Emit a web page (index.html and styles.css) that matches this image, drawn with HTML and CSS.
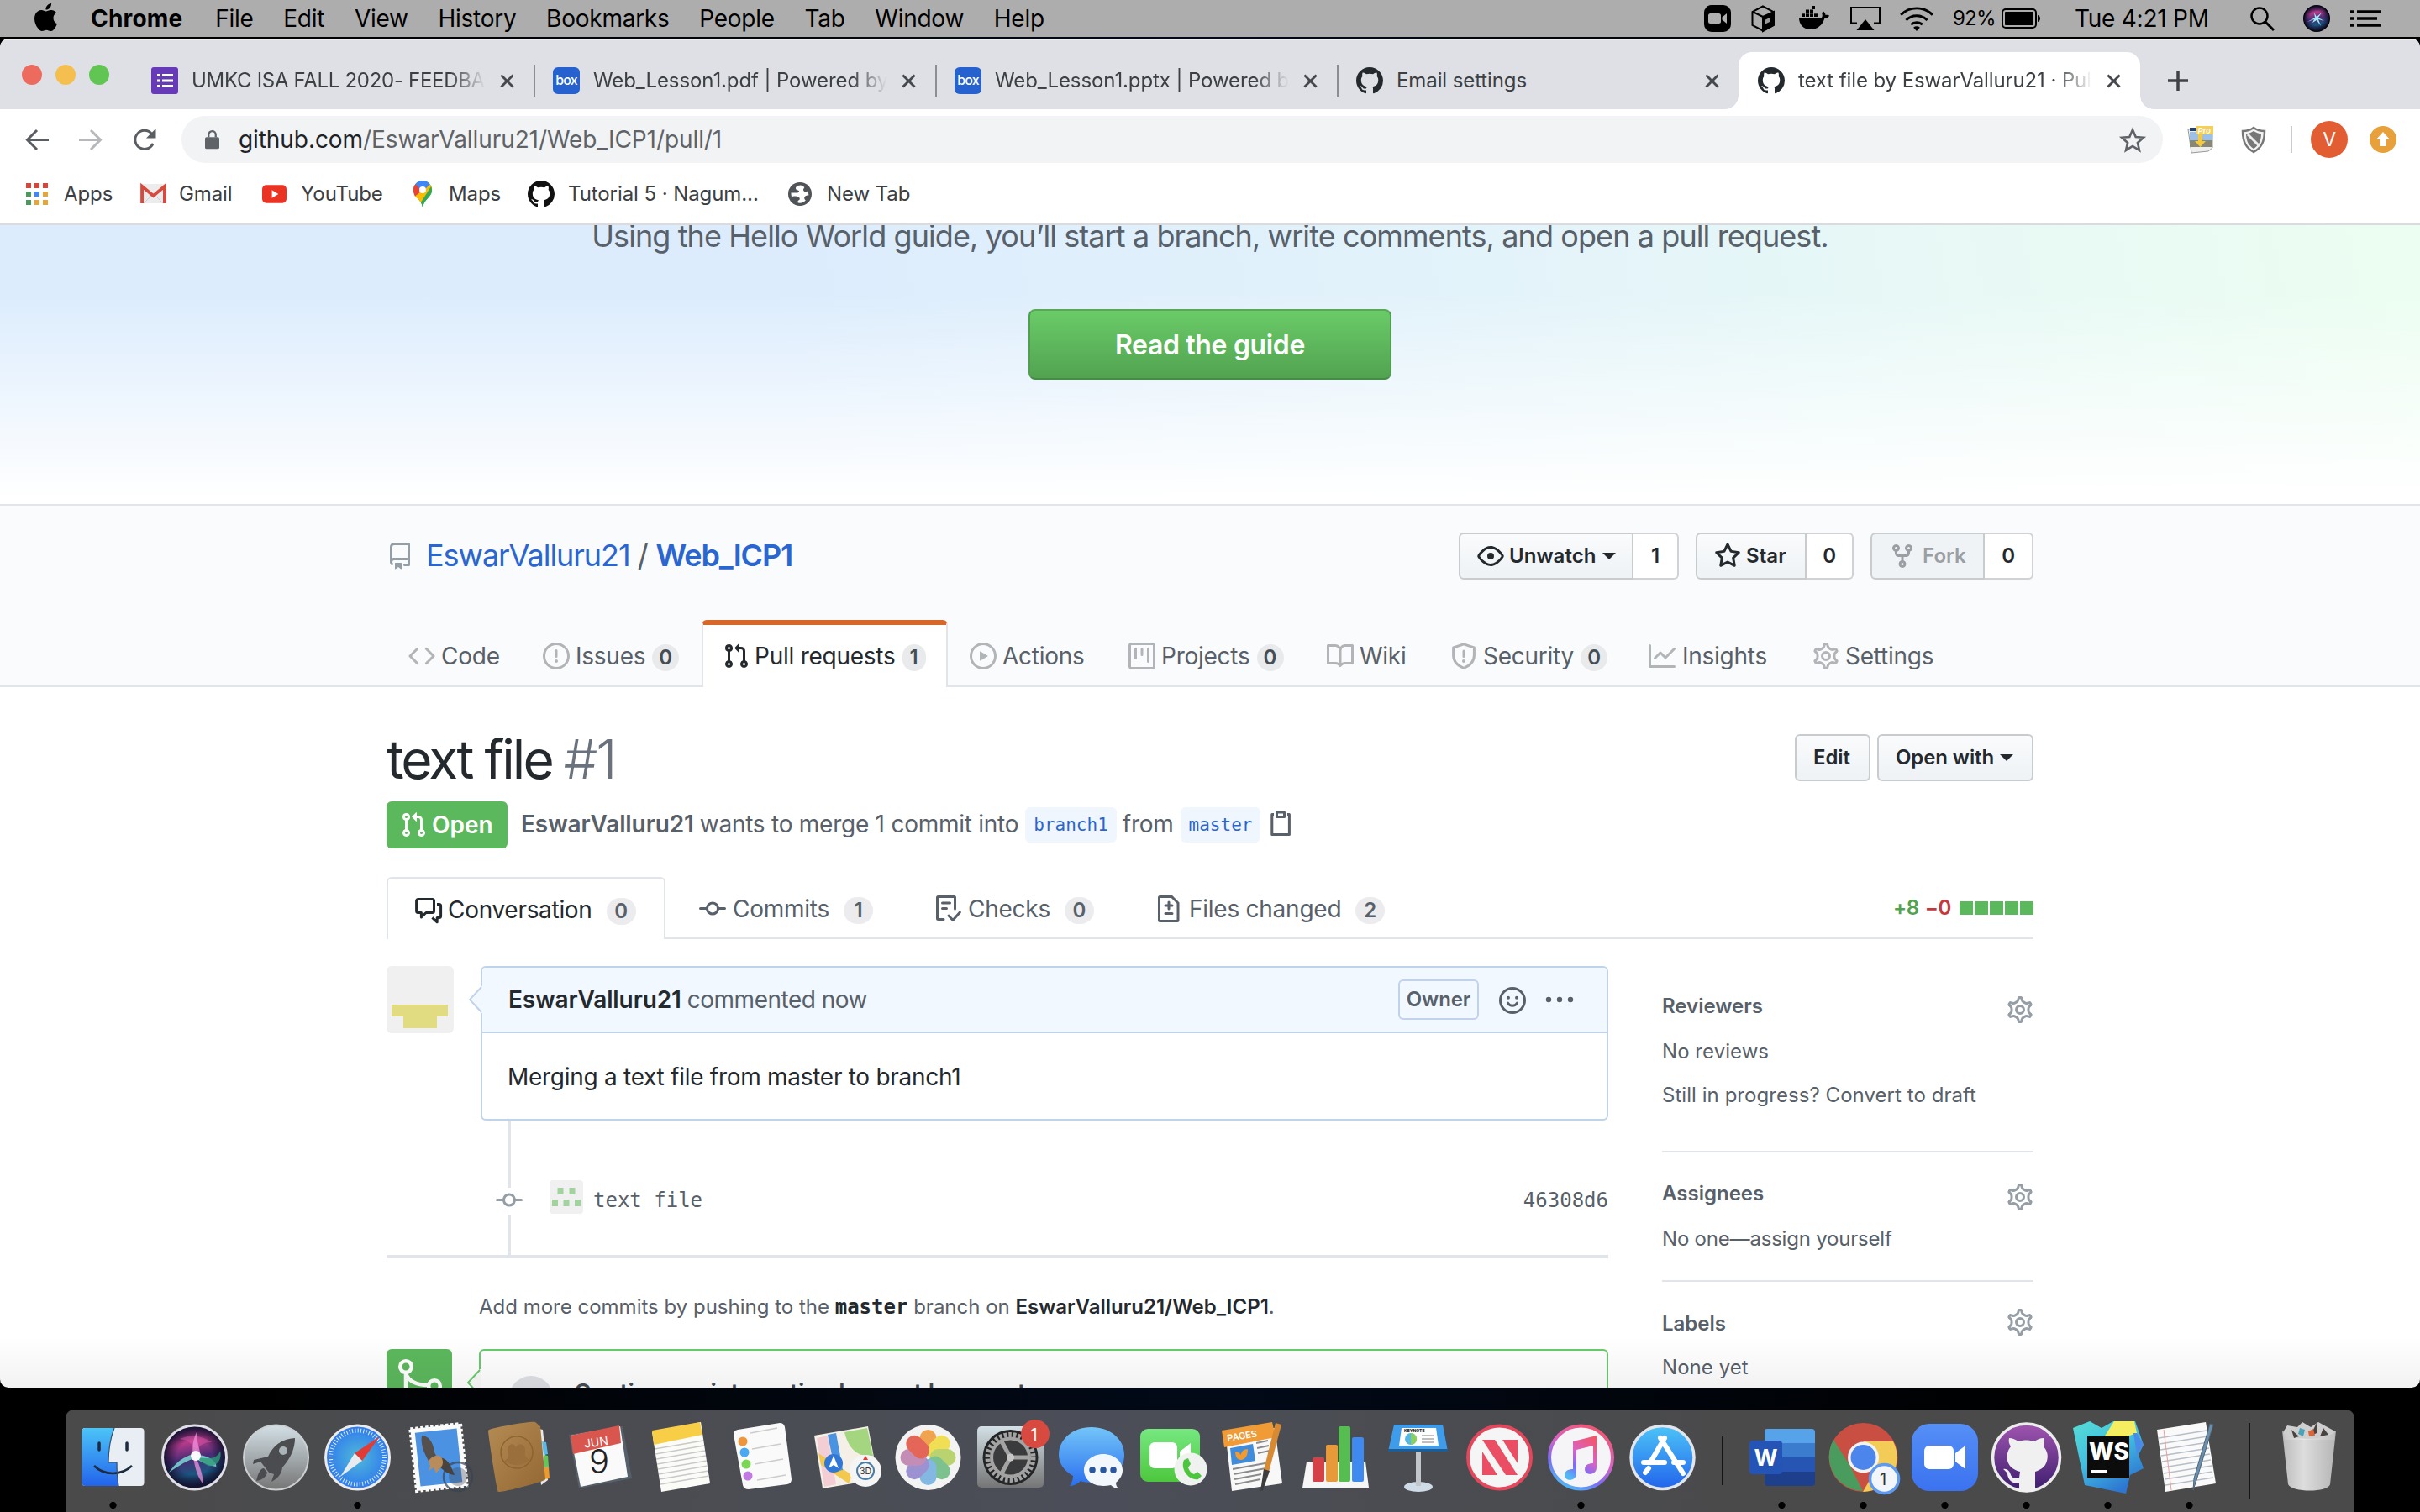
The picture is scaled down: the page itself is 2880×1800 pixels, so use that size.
FILE: index.html
```html
<!DOCTYPE html>
<html lang="en">
<head>
<meta charset="utf-8">
<title>text file by EswarValluru21 · Pull Request #1</title>
<link rel="stylesheet" href="styles.css">
</head>
<body>
<svg class="defs" aria-hidden="true">
  <defs>
    <symbol id="github" viewBox="0 0 16 16"><path d="M8 0C3.58 0 0 3.58 0 8c0 3.54 2.29 6.53 5.47 7.59.4.07.55-.17.55-.38 0-.19-.01-.82-.01-1.49-2.01.37-2.53-.49-2.69-.94-.09-.23-.48-.94-.82-1.13-.28-.15-.68-.52-.01-.53.63-.01 1.08.58 1.23.82.72 1.21 1.87.87 2.33.66.07-.52.28-.87.51-1.07-1.78-.2-3.64-.89-3.64-3.95 0-.87.31-1.59.82-2.15-.08-.2-.36-1.02.08-2.12 0 0 .67-.21 2.2.82.64-.18 1.32-.27 2-.27.68 0 1.36.09 2 .27 1.53-1.04 2.2-.82 2.2-.82.44 1.1.16 1.92.08 2.12.51.56.82 1.27.82 2.15 0 3.07-1.87 3.75-3.65 3.95.29.25.54.73.54 1.48 0 1.07-.01 1.93-.01 2.2 0 .21.15.46.55.38A8.013 8.013 0 0016 8c0-4.42-3.58-8-8-8z"/></symbol>
    <symbol id="pr" viewBox="0 0 16 16"><path fill-rule="evenodd" d="M7.177 3.073L9.573.677A.25.25 0 0110 .854v4.792a.25.25 0 01-.427.177L7.177 3.427a.25.25 0 010-.354zM3.75 2.5a.75.75 0 100 1.5.75.75 0 000-1.5zm-2.25.75a2.25 2.25 0 113 2.122v5.256a2.251 2.251 0 11-1.5 0V5.372A2.25 2.25 0 011.5 3.25zM11 2.5h-1V4h1a1 1 0 011 1v5.628a2.251 2.251 0 101.5 0V5A2.5 2.5 0 0011 2.5zm1 10.25a.75.75 0 111.5 0 .75.75 0 01-1.5 0zM3.75 12a.75.75 0 100 1.5.75.75 0 000-1.5z"/></symbol>
    <symbol id="gear" viewBox="0 0 16 16"><g fill="none" stroke="currentColor"><path stroke-width="1.36" transform="translate(8 8) scale(1.11) translate(-8 -8)" d="M7.429 1.525a6.593 6.593 0 011.142 0c.036.003.108.036.137.146l.289 1.105c.147.56.55.967.997 1.189.174.086.341.183.501.29.417.278.97.423 1.53.27l1.102-.303c.11-.03.175.016.195.046.219.31.41.641.573.989.014.031.022.11-.059.19l-.815.806c-.411.406-.562.957-.53 1.456a4.588 4.588 0 010 .582c-.032.499.119 1.05.53 1.456l.815.806c.08.08.073.159.059.19a6.494 6.494 0 01-.573.99c-.02.029-.086.074-.195.045l-1.103-.303c-.559-.153-1.112-.008-1.529.27-.16.107-.327.204-.5.29-.449.222-.851.628-.998 1.189l-.289 1.105c-.029.11-.101.143-.137.146a6.613 6.613 0 01-1.142 0c-.036-.003-.108-.037-.137-.146l-.289-1.105c-.147-.56-.55-.967-.997-1.189a4.502 4.502 0 01-.501-.29c-.417-.278-.97-.423-1.53-.27l-1.102.303c-.11.03-.175-.016-.195-.046a6.492 6.492 0 01-.573-.989c-.014-.031-.022-.11.059-.19l.815-.806c.411-.406.562-.957.53-1.456a4.587 4.587 0 010-.582c.032-.499-.119-1.05-.53-1.456l-.815-.806c-.08-.08-.073-.159-.059-.19a6.44 6.44 0 01.573-.99c.02-.029.086-.075.195-.045l1.103.303c.559.153 1.112.008 1.529-.27.16-.107.327-.204.5-.29.449-.222.851-.628.998-1.189l.289-1.105c.029-.11.101-.143.137-.146z"/><circle cx="8" cy="8" r="2.25" stroke-width="1.5"/></g></symbol>
    <symbol id="commit" viewBox="0 0 16 16"><path fill-rule="evenodd" d="M10.5 7.75a2.5 2.5 0 11-5 0 2.5 2.5 0 015 0zm1.43.75a4.002 4.002 0 01-7.86 0H.75a.75.75 0 110-1.5h3.32a4.001 4.001 0 017.86 0h3.32a.75.75 0 110 1.5h-3.32z"/></symbol>
    <symbol id="close" viewBox="0 0 18 18"><path d="M1.500 1.500 16.500 16.500M16.500 1.500 1.500 16.500" stroke="#45484d" stroke-width="3"/></symbol>
    <linearGradient id="sky" x2="0" y2="1"><stop stop-color="#4cc4f7"/><stop offset="1" stop-color="#2264ec"/></linearGradient>
    <linearGradient id="steel" x2="0" y2="1"><stop stop-color="#d3e0e6"/><stop offset="1" stop-color="#757575"/></linearGradient>
    <radialGradient id="saf"><stop stop-color="#4fb9d8"/><stop offset="1" stop-color="#2f79ee"/></radialGradient>
    <linearGradient id="orb" x1=".4" y1="0" x2=".6" y2="1"><stop stop-color="#4a1f5c"/><stop offset=".25" stop-color="#b83a8c"/><stop offset=".5" stop-color="#4a2c74"/><stop offset=".75" stop-color="#1b5580"/><stop offset="1" stop-color="#141433"/></linearGradient>
    <radialGradient id="rim"><stop offset=".55" stop-color="#12102e" stop-opacity="0"/><stop offset="1" stop-color="#12102e"/></radialGradient>
    <linearGradient id="mus" x1=".8" y1="0" x2=".3" y2="1"><stop stop-color="#f2566a"/><stop offset=".45" stop-color="#d962c4"/><stop offset=".75" stop-color="#7a6cf5"/><stop offset="1" stop-color="#50b9f5"/></linearGradient>
    <linearGradient id="grn" x2="0" y2="1"><stop stop-color="#76e880"/><stop offset="1" stop-color="#4dc73d"/></linearGradient>
    <linearGradient id="msg" x2="0" y2="1"><stop stop-color="#73c5f9"/><stop offset="1" stop-color="#2a70ee"/></linearGradient>
    <linearGradient id="zm" x2="0" y2="1"><stop stop-color="#558ff6"/><stop offset="1" stop-color="#3b72f0"/></linearGradient>
    <linearGradient id="gh" x2="0" y2="1"><stop stop-color="#a055b0"/><stop offset="1" stop-color="#3c1d6e"/></linearGradient>
    <linearGradient id="tan" x2="1" y2="1"><stop stop-color="#b58b54"/><stop offset="1" stop-color="#936732"/></linearGradient>
    <linearGradient id="can" x2="1" y2="0"><stop stop-color="#c4c4c4"/><stop offset=".4" stop-color="#e8e8e8"/><stop offset="1" stop-color="#bdbdbd"/></linearGradient>
    <linearGradient id="wsg" x2=".6" y2="1"><stop stop-color="#56ddd6"/><stop offset=".5" stop-color="#43bfe0"/><stop offset="1" stop-color="#2d76d2"/></linearGradient>
  </defs>
</svg>

<header class="menubar">
  <svg class="apple" viewBox="2.500 0 19 24"><path d="M12.152 6.896c-.948 0-2.415-1.078-3.960-1.040-2.040.027-3.910 1.183-4.961 3.014-2.117 3.675-.546 9.103 1.519 12.090 1.013 1.454 2.208 3.090 3.792 3.039 1.520-.065 2.090-.987 3.935-.987 1.831 0 2.350.987 3.960.948 1.637-.026 2.676-1.480 3.676-2.948 1.156-1.688 1.636-3.325 1.662-3.415-.039-.013-3.182-1.221-3.220-4.857-.026-3.040 2.480-4.494 2.597-4.559-1.429-2.090-3.623-2.324-4.390-2.376-2-.156-3.675 1.090-4.610 1.090zM15.530 3.830c.843-1.012 1.400-2.427 1.245-3.830-1.207.052-2.662.805-3.532 1.818-.78.896-1.454 2.338-1.273 3.714 1.338.104 2.715-.688 3.559-1.701"/></svg>
  <nav class="menus"><b>Chrome</b><span>File</span><span>Edit</span><span>View</span><span>History</span><span>Bookmarks</span><span>People</span><span>Tab</span><span>Window</span><span>Help</span></nav>
  <div class="status">
    <svg class="st-zoom" viewBox="0 0 32 32"><rect width="32" height="32" rx="9"/><rect x="5" y="10" width="15" height="12" rx="2.500" fill="#b0b0b0"/><path d="M21.500 14.500 27 10v12l-5.500-4.500z" fill="#b0b0b0"/></svg>
    <svg class="st-box" viewBox="0 0 28 32"><path d="M14 1.500 26.500 8v16L14 30.500 1.500 24V8z" fill="none" stroke="#000" stroke-width="2"/><path d="M14 14 27 8v16L14 31zM2 8l12 6" stroke="#000" stroke-width="2"/><path d="M17 22.500 22 20v-5l-5 2.500z" fill="#999"/></svg>
    <svg class="st-docker" viewBox="0 0 36 30"><path d="M0 14h27c1-1.500 1-4 0-5.500l2-2c1.500 1 2.500 3 2.500 4.500 1.500-.5 3.500-.3 4.500.8-1 2-3 2.800-5.500 2.800C28 23 22 28 14 28 5 28 0 22 0 14z"/><path d="M3 9h20v4H3zM8 4.500h10v4H8zM15 0h4v4h-4z"/><path d="M7.500 4v9M12.500 4v9M17.500 4v9M3 8.800h20" stroke="#adadad"/></svg>
    <svg class="st-air" viewBox="0 0 36 28"><path d="M8 19.500H1V1h34v18.500h-7" fill="none" stroke="#000" stroke-width="2"/><path d="M18 15 28.500 28h-21z"/></svg>
    <svg class="st-wifi" viewBox="0 0 42 30"><g fill="none" stroke="#000" stroke-width="3"><path d="M1.500 10a27.500 27.500 0 0 1 39 0M8 16.500a18.500 18.500 0 0 1 26 0M14 22a10.500 10.500 0 0 1 14 0"/></g><path d="M21 30l-4-4.500a6 6 0 0 1 8 0z"/></svg>
    <span class="pct">92%</span>
    <svg class="st-bat" viewBox="0 0 46 24"><rect x="1" y="1" width="40" height="22" rx="4" fill="none" stroke="#000" stroke-width="2"/><rect x="4" y="4" width="34" height="16" rx="1"/><path d="M43 8c4 1 4 7 0 8z"/></svg>
    <span class="clock">Tue 4:21 PM</span>
    <svg class="st-find" viewBox="0 0 29 29"><circle cx="11" cy="11" r="9.500" fill="none" stroke="#000" stroke-width="2.500"/><path d="m18 18 10 10" stroke="#000" stroke-width="3"/></svg>
    <svg class="st-siri" viewBox="0 0 32 32"><circle cx="16" cy="16" r="15" fill="url(#orb)" stroke="#000" stroke-width="2"/><circle cx="16" cy="16" r="15" fill="url(#rim)"/><path d="M5 20l9-5-1-6 3 5 6-5-4 6 7 4-7-2 3 8-5-7-5 3 2-4z" fill="#9fe8f0"/></svg>
    <svg class="st-list" viewBox="0 0 37 20"><path d="M8 2h29M8 10h24M8 18h29M0 2h4M0 10h4M0 18h4" stroke="#000" stroke-width="3.500"/></svg>
  </div>
</header>

<main class="window">
  <div class="tabstrip">
    <div class="lights"><i class="red"></i><i class="yellow"></i><i class="green"></i></div>
    <div class="tab"><svg class="fav" viewBox="0 0 32 32"><rect width="32" height="32" rx="3" fill="#673ab7"/><path d="M7 9.500h4M7 16h4M7 22.500h4M13 9.500h13M13 16h13M13 22.500h13" stroke="#fff" stroke-width="3"/></svg><span class="ttl t1">UMKC ISA FALL 2020- FEEDBACK</span><svg class="x"><use href="#close"/></svg></div>
    <div class="tab div"><span class="fav box">box</span><span class="ttl">Web_Lesson1.pdf | Powered by Box</span><svg class="x"><use href="#close"/></svg></div>
    <div class="tab div"><span class="fav box">box</span><span class="ttl">Web_Lesson1.pptx | Powered by Box</span><svg class="x"><use href="#close"/></svg></div>
    <div class="tab div"><svg class="fav" fill="#24292e"><use href="#github"/></svg><span class="ttl nofade">Email settings</span><svg class="x"><use href="#close"/></svg></div>
    <div class="tab active"><svg class="fav" fill="#24292e"><use href="#github"/></svg><span class="ttl">text file by EswarValluru21 · Pull Request</span><svg class="x"><use href="#close"/></svg></div>
    <svg class="plus" viewBox="0 0 24 24"><path d="M12 0v24M0 12h24" stroke="#3f4246" stroke-width="3.500"/></svg>
  </div>

  <div class="toolbar">
    <svg class="nav-i" viewBox="0 0 28 26"><path d="M28 13H3M14 1.500 2.500 13 14 24.500" fill="none" stroke="#5a5d61" stroke-width="3"/></svg>
    <svg class="nav-i" viewBox="0 0 28 26"><path d="M0 13h25M14 1.500 25.500 13 14 24.500" fill="none" stroke="#b6b8bb" stroke-width="3"/></svg>
    <svg class="nav-i" viewBox="0 0 28 28"><path d="M24.500 18.500A11.500 11.500 0 1 1 22.500 6.200L25 9" fill="none" stroke="#5a5d61" stroke-width="3"/><path d="M28 0v12H16z" fill="#5a5d61"/></svg>
    <div class="omni">
      <svg class="lock" viewBox="0 0 18 24"><rect y="9" width="18" height="15" rx="2" fill="#5f6368"/><path d="M4.500 9V6a4.500 4.500 0 0 1 9 0v3" fill="none" stroke="#5f6368" stroke-width="2.400"/></svg>
      <span class="url">github.com<em>/EswarValluru21/Web_ICP1/pull/1</em></span>
      <svg class="star" viewBox="0 0 30 28"><path d="m15 2.500 3.700 8.500 9.200.8-7 6.100 2.100 9L15 22l-8 4.900 2.100-9-7-6.100 9.200-.8z" fill="none" stroke="#5f6368" stroke-width="2.600"/></svg>
    </div>
    <svg class="ext" viewBox="0 0 32 32"><path d="M2 4l21-3 8 5v20l-5 4-20 2z" fill="#eee" stroke="#999"/><path d="M4 7h27v10H4z" fill="#9dc0e8"/><path d="M4 17h27v8H4z" fill="#8a8674"/><path d="M4 2h8v4H4z" fill="#26436f"/><path d="M14 10h5v8h4l-6.500 7-6.500-7h4z" fill="#f3c944"/><rect x="12" width="20" height="10" fill="#f7cf55"/><text x="13.500" y="8.600" class="pro">Pro</text></svg>
    <svg class="ext" viewBox="0 0 32 32"><path d="M16 2C12 5 7 6 3 6c0 13 4 20 13 25 9-5 13-12 13-25-4 0-9-1-13-4z" fill="#f2f2f2" stroke="#777" stroke-width="2.500"/><path d="M16 6c-3 2-6 3-9 3.500.3 9 3 13.500 9 17.500 6-4 8.700-8.500 9-17.500C22 9 19 8 16 6z" fill="#777"/><path d="m9 10 14 14" stroke="#eee" stroke-width="3"/></svg>
    <i class="vline"></i>
    <span class="avatar-v">V</span>
    <svg class="upd" viewBox="0 0 32 32"><circle cx="16" cy="16" r="16" fill="#e8a03a"/><path d="M16 7l8 9h-4v8h-8v-8H8z" fill="#fff"/></svg>
  </div>

  <div class="bookmarks">
    <svg class="b-apps" viewBox="0 0 26 26"><path d="M0 3h26" stroke="#db4437" stroke-width="6" stroke-dasharray="6 4"/><path d="M0 13h6M0 23h6" stroke="#4c9a5b" stroke-width="6"/><path d="M10 13h6" stroke="#4285f4" stroke-width="6"/><path d="M20 13h6M20 23h6M10 23h6" stroke="#e6a53a" stroke-width="6"/></svg><span class="bm w1">Apps</span>
    <svg class="b-gmail" viewBox="0 0 32 24"><rect width="32" height="24" rx="2" fill="#ececec"/><path d="M4 24 16 12l12 12" fill="none" stroke="#ccc"/><path d="M2 24V3l14 11.500L30 3v21" fill="none" stroke="#d54b3d" stroke-width="4"/></svg><span class="bm w2">Gmail</span>
    <svg class="b-yt" viewBox="0 0 30 22"><rect width="30" height="22" rx="5" fill="#eb3323"/><path d="M12 6l8 5-8 5z" fill="#fff"/></svg><span class="bm w3">YouTube</span>
    <svg class="b-map" viewBox="0 0 22 32"><path d="M11 0a11 11 0 0 1 11 11c0 9-9 10-11 21C9 21 0 20 0 11A11 11 0 0 1 11 0z" fill="#34a853"/><path d="M2.500 4 11 11l-8.500 8.500C1 17.500 0 14.500 0 11c0-3 1-5 2.500-7z" fill="#ea4335"/><path d="m2 18.500 18-14C22 8 22 11 21 14L8.500 26C7 22 4 21 2 18.500z" fill="#fbbc04"/><path d="M2.500 4A11 11 0 0 1 19.500 4L11 14z" fill="#4285f4"/><path d="M22 11c0 9-9 10-11 21-.4-2.500-1.200-4.500-2.200-6L21 7c.6 1.200 1 2.500 1 4z" fill="#34a853"/><circle cx="11" cy="11" r="4" fill="#fff"/></svg><span class="bm w4">Maps</span>
    <svg class="b-gh" fill="#111"><use href="#github"/></svg><span class="bm w5">Tutorial 5 · Nagum...</span>
    <svg class="b-globe" viewBox="0 0 28 28"><circle cx="14" cy="14" r="14" fill="#505357"/><path d="M15 3.500c-5 0-7 3-5.500 5 1 1.500 3 .5 3.500 2 .3 1.500-1.500 2-3 2H3.500c0 2 0 3 .8 5 2-1.500 6-1 8 0s2 3.500 0 4c-1 .5-1 2-.5 3 4 .5 7-.5 9-3-1-1-2-2-1.500-3.500.5-2 3-2.500 5-2.500 0-2-.3-3.500-1-5-2 1-4 1-5-.5s.5-2.500 1-4c-1-1-2.500-2-4.300-2.500z" fill="#fff"/></svg><span class="bm">New Tab</span>
  </div>

  <div class="page">
    <section class="hero">
      <p>Using the Hello World guide, you’ll start a branch, write comments, and open a pull request.</p>
      <a class="guide">Read the guide</a>
    </section>

    <section class="repohead">
      <div class="col">
        <div class="titlebar">
          <svg class="oct muted" viewBox="0 0 16 16"><path fill-rule="evenodd" d="M2 2.500A2.500 2.500 0 014.500 0h8.750a.75.75 0 01.75.75v12.500a.75.75 0 01-.75.75h-2.500a.75.75 0 110-1.500h1.750v-2h-8a1 1 0 00-.714 1.700.75.75 0 01-1.072 1.050A2.495 2.495 0 012 11.500v-9zm10.500-1V9h-8c-.356 0-.694.074-1 .208V2.500a1 1 0 011-1h8zM5 12.250v3.250a.25.25 0 00.4.2l1.450-1.087a.25.25 0 01.3 0L8.600 15.700a.25.25 0 00.4-.2v-3.250a.25.25 0 00-.25-.25h-3.500a.25.25 0 00-.25.25z"/></svg>
          <span class="owner">EswarValluru21</span><span class="slash">/</span><span class="repo">Web_ICP1</span>
          <div class="socials">
            <span class="grp"><a class="btn l g1"><svg class="oct" viewBox="0 0 16 16"><path fill-rule="evenodd" d="M1.679 7.932c.412-.621 1.242-1.750 2.366-2.717C5.175 4.242 6.527 3.500 8 3.500c1.473 0 2.824.742 3.955 1.715 1.124.967 1.954 2.096 2.366 2.717a.119.119 0 010 .136c-.412.621-1.242 1.750-2.366 2.717C10.825 11.758 9.473 12.500 8 12.500c-1.473 0-2.824-.742-3.955-1.715C2.920 9.818 2.090 8.690 1.679 8.068a.119.119 0 010-.136zM8 2c-1.981 0-3.670.992-4.933 2.078C1.797 5.169.88 6.423.43 7.100a1.619 1.619 0 000 1.798c.45.678 1.367 1.932 2.637 3.024C4.329 13.008 6.019 14 8 14c1.981 0 3.670-.992 4.933-2.078 1.270-1.091 2.187-2.345 2.637-3.023a1.619 1.619 0 000-1.798c-.45-.678-1.367-1.932-2.637-3.023C11.671 2.992 9.981 2 8 2zm0 8a2 2 0 100-4 2 2 0 000 4z"/></svg><span>Unwatch</span><i class="caret"></i></a><a class="cnt c1">1</a></span>
            <span class="grp"><a class="btn l g2"><svg class="oct" viewBox="0 0 16 16"><path fill-rule="evenodd" d="M8 .25a.75.75 0 01.673.418l1.882 3.815 4.210.612a.75.75 0 01.416 1.279l-3.046 2.970.719 4.192a.75.75 0 01-1.088.791L8 12.347l-3.766 1.980a.75.75 0 01-1.088-.79l.72-4.194L.818 6.374a.75.75 0 01.416-1.280l4.210-.611L7.327.668A.75.75 0 018 .25zm0 2.445L6.615 5.500a.75.75 0 01-.564.41l-3.097.45 2.240 2.184a.75.75 0 01.216.664l-.528 3.084 2.769-1.456a.75.75 0 01.698 0l2.770 1.456-.53-3.084a.75.75 0 01.216-.664l2.240-2.183-3.096-.45a.75.75 0 01-.564-.41L8 2.694v.001z"/></svg><span>Star</span></a><a class="cnt c2">0</a></span>
            <span class="grp"><a class="btn l g3 off"><svg class="oct" viewBox="0 0 16 16"><path fill-rule="evenodd" d="M5 3.250a.75.75 0 11-1.500 0 .75.75 0 011.500 0zm0 2.122a2.250 2.250 0 10-1.500 0v.878A2.250 2.250 0 005.750 8.500h1.500v2.128a2.251 2.251 0 101.500 0V8.500h1.500a2.250 2.250 0 002.250-2.250v-.878a2.250 2.250 0 10-1.500 0v.878a.75.75 0 01-.75.75h-4.500A.75.75 0 015 6.250v-.878zm3.750 7.378a.75.75 0 11-1.500 0 .75.75 0 011.500 0zm3-8.750a.75.75 0 100-1.500.75.75 0 000 1.500z"/></svg><span>Fork</span></a><a class="cnt c3">0</a></span>
          </div>
        </div>
        <nav class="rtabs">
          <a class="n-code"><svg class="oct" viewBox="0 0 16 16"><path d="M4.720 3.220a.75.75 0 011.060 1.060L2.060 8l3.720 3.720a.75.75 0 11-1.060 1.060L.47 8.530a.75.75 0 010-1.060l4.250-4.250zm6.560 0a.75.75 0 10-1.060 1.060L13.940 8l-3.720 3.720a.75.75 0 101.060 1.060l4.250-4.250a.75.75 0 000-1.060l-4.250-4.250z"/></svg><span>Code</span></a>
          <a class="n-iss"><svg class="oct" viewBox="0 0 16 16"><path fill-rule="evenodd" d="M8 1.500a6.500 6.500 0 100 13 6.500 6.500 0 000-13zM0 8a8 8 0 1116 0A8 8 0 010 8zm9 3a1 1 0 11-2 0 1 1 0 012 0zm-.25-6.250a.75.75 0 00-1.500 0v3.500a.75.75 0 001.500 0v-3.500z"/></svg><span>Issues</span><b>0</b></a>
          <a class="n-pr on"><svg class="oct"><use href="#pr"/></svg><span>Pull requests</span><b>1</b></a>
          <a class="n-act"><svg class="oct" viewBox="0 0 16 16"><path fill-rule="evenodd" d="M1.500 8a6.500 6.500 0 1113 0 6.500 6.500 0 01-13 0zM8 0a8 8 0 100 16A8 8 0 008 0zM6.379 5.227A.25.25 0 006 5.442v5.117a.25.25 0 00.379.214l4.264-2.559a.25.25 0 000-.428L6.379 5.227z"/></svg><span>Actions</span></a>
          <a class="n-proj"><svg class="oct" viewBox="0 0 16 16"><path fill-rule="evenodd" d="M1.750 0A1.750 1.750 0 000 1.750v12.500C0 15.216.784 16 1.750 16h12.500A1.750 1.750 0 0016 14.250V1.750A1.750 1.750 0 0014.250 0H1.750zM1.500 1.750a.25.25 0 01.25-.25h12.500a.25.25 0 01.25.25v12.500a.25.25 0 01-.25.25H1.750a.25.25 0 01-.25-.25V1.750zM11.750 3a.75.75 0 00-.75.75v7.500a.75.75 0 001.500 0v-7.500a.75.75 0 00-.75-.75zm-8.250.75a.75.75 0 011.500 0v5.500a.75.75 0 01-1.500 0v-5.500zM8 3a.75.75 0 00-.75.75v3.500a.75.75 0 001.500 0v-3.500A.75.75 0 008 3z"/></svg><span>Projects</span><b>0</b></a>
          <a class="n-wiki"><svg class="oct" viewBox="0 0 16 16"><path fill-rule="evenodd" d="M0 1.750A.75.75 0 01.75 1h4.253c1.227 0 2.317.59 3 1.501A3.744 3.744 0 0111.006 1h4.245a.75.75 0 01.75.75v10.500a.75.75 0 01-.75.75h-4.507a2.250 2.250 0 00-1.591.659l-.622.621a.75.75 0 01-1.060 0l-.622-.621A2.250 2.250 0 005.258 13H.75a.75.75 0 01-.75-.75V1.750zm8.755 3a2.250 2.250 0 012.250-2.250H14.500v9h-3.757c-.71 0-1.400.201-1.992.572l.004-7.322zm-1.504 7.324l.004-5.073-.002-2.253A2.250 2.250 0 005.003 2.500H1.500v9h3.757a3.750 3.750 0 011.994.574z"/></svg><span>Wiki</span></a>
          <a class="n-sec"><svg class="oct" viewBox="0 0 16 16"><path d="M8 .95 14.200 3v4.500c0 3.500-2 6-6.200 7.700C3.800 13.500 1.800 11 1.800 7.500V3zM8 5v3.250" fill="none" stroke="currentColor" stroke-width="1.500" stroke-linejoin="round" stroke-linecap="round"/><circle cx="8" cy="11" r="1"/></svg><span>Security</span><b>0</b></a>
          <a class="n-ins"><svg class="oct" viewBox="0 0 16 16"><path d="M1.500 1.750a.75.75 0 00-1.500 0v12.500c0 .414.336.75.75.75h14.500a.75.75 0 000-1.500H1.500V1.750zm14.280 2.530a.75.75 0 00-1.060-1.060L10 7.940 7.530 5.470a.75.75 0 00-1.060 0L3.220 8.720a.75.75 0 001.060 1.060L7 7.060l2.470 2.470a.75.75 0 001.060 0l5.250-5.250z"/></svg><span>Insights</span></a>
          <a class="n-set"><svg class="oct"><use href="#gear"/></svg><span>Settings</span></a>
        </nav>
      </div>
    </section>

    <section class="col pull">
      <div class="headline"><h1>text file <span>#1</span></h1><a class="btn edit">Edit</a><a class="btn openw">Open with<i class="caret"></i></a></div>
      <div class="meta">
        <span class="state"><svg class="oct"><use href="#pr"/></svg>Open</span>
        <b>EswarValluru21</b><span class="wants">wants to merge 1 commit into</span><code>branch1</code><span class="from">from</span><code>master</code>
        <svg class="oct clip" viewBox="0 0 16 16"><path d="M5.750 1h4.500v2.800h-4.500zM4 2.250H2.900v12h10.300v-12H12" fill="none" stroke="currentColor" stroke-width="1.500" stroke-linejoin="round"/></svg>
      </div>
      <nav class="ptabs">
        <a class="on p1"><svg class="oct" viewBox="0 0 16 16"><path d="M1.750 1.750h8.500a1 1 0 0 1 1 1v6a1 1 0 0 1-1 1H6.500L3.700 12.500V9.750h-2a1 1 0 0 1-.9-1v-6a1 1 0 0 1 1-1zM13 4.800h1.300a1 1 0 0 1 1 1v6a1 1 0 0 1-1 1h-1.200v2.600L10.200 12.700" fill="none" stroke="currentColor" stroke-width="1.500" stroke-linejoin="round"/></svg><span>Conversation</span><b>0</b></a>
        <a class="p2"><svg class="oct"><use href="#commit"/></svg><span>Commits</span><b>1</b></a>
        <a class="p3"><svg class="oct" viewBox="0 0 16 16"><path d="M5.500 14.250H2.250a.5.5 0 0 1-.5-.5V1.250a.5.500 0 0 1 .5-.5h9.500a.5.500 0 0 1 .5.500V8M4.750 4.500h4.500M4.750 7.750h2.500M8.500 12l2.500 2.700L15.200 10" fill="none" stroke="currentColor" stroke-width="1.500" stroke-linecap="round" stroke-linejoin="round"/></svg><span>Checks</span><b>0</b></a>
        <a class="p4"><svg class="oct" viewBox="0 0 16 16"><path d="M2.750.75h7L13.500 4.500v10.250a.5.500 0 0 1-.5.500H2.750a.5.500 0 0 1-.5-.5V1.250a.5.500 0 0 1 .5-.5zM8 4v4M6 6h4M6 10.750h4" fill="none" stroke="currentColor" stroke-width="1.500" stroke-linecap="round"/></svg><span>Files changed</span><b>2</b></a>
        <div class="diffstat"><span class="add">+8</span><span class="del">−0</span><i></i><i></i><i></i><i></i><i></i></div>
      </nav>

      <div class="cols">
        <div class="discussion">
          <div class="comment-row">
            <svg class="avatar" viewBox="0 0 80 80"><rect width="80" height="80" rx="6" fill="#f0f0f0"/><path d="M6 46h67v14H60v14H20V60H6z" fill="#e1db81"/></svg>
            <div class="comment">
              <svg class="arrow" viewBox="0 0 16 32"><path d="M16 0v32h-1L1 16 15 0z" fill="#f1f8ff"/><path d="M15 1 1 16l14 15" fill="none" stroke="#c0d3eb" stroke-width="2"/></svg>
              <div class="chead"><b>EswarValluru21</b><span>commented now</span><em>Owner</em>
                <svg class="oct" viewBox="0 0 16 16"><g fill="none" stroke="currentColor" stroke-width="1.500"><circle cx="8" cy="8" r="7.250"/><path d="M5.300 9.600c1.200 2 4.200 2 5.400 0" stroke-linecap="round"/></g><circle cx="5.500" cy="6.400" r="1"/><circle cx="10.500" cy="6.400" r="1"/></svg>
                <svg class="kebab" viewBox="0 0 34 8"><circle cx="4" cy="4" r="3.200"/><circle cx="17" cy="4" r="3.200"/><circle cx="30" cy="4" r="3.200"/></svg>
              </div>
              <p>Merging a text file from master to branch1</p>
            </div>
          </div>
          <div class="timeline"><i class="rail top"></i><i class="rail bot"></i>
            <svg class="oct node"><use href="#commit"/></svg>
            <svg class="mini" viewBox="0 0 40 40"><rect width="40" height="40" rx="4" fill="#f0f0f0"/><path d="M9.500 9h7v8h-7zM23.500 9h7v8h-7zM3 23h7v8H3zM16.500 23h7v8h-7zM30 23h7v8h-7z" fill="#a2d29e"/></svg>
            <span>text file</span><span class="hash">46308d6</span>
          </div>
          <p class="push">Add more commits by pushing to the <code>master</code> branch on <b>EswarValluru21/Web_ICP1</b>.</p>
          <div class="merge-row">
            <svg class="merge-i" viewBox="0 0 78 56"><rect width="78" height="66" rx="6" fill="#5cb85c"/><g fill="none" stroke="#fff" stroke-width="4.500"><circle cx="23" cy="21" r="6.800"/><circle cx="57" cy="44" r="6.800"/><path d="M23 28v30M23 29c3 9 12 14 27 14"/></g></svg>
            <div class="mergebox">
              <svg class="arrow" viewBox="0 0 16 32"><path d="M16 0v32h-1L1 16 15 0z" fill="#fafafa"/><path d="M15 1 1 16l14 15" fill="none" stroke="#66cb6b" stroke-width="2"/></svg>
              <i></i><b>Continuous integration has not been set up</b>
            </div>
          </div>
        </div>
        <aside>
          <div class="side s1"><h3>Reviewers<svg class="oct"><use href="#gear"/></svg></h3><p>No reviews</p><p>Still in progress? Convert to draft</p></div>
          <div class="side s2"><h3>Assignees<svg class="oct"><use href="#gear"/></svg></h3><p class="none">No one—assign yourself</p></div>
          <div class="side s3"><h3>Labels<svg class="oct"><use href="#gear"/></svg></h3><p>None yet</p></div>
        </aside>
      </div>
    </section>
    <div class="fade"></div>
  </div>
</main>

<footer class="dock">
  <svg class="run" viewBox="0 0 97 122"><rect x="11.500" y="22" width="74" height="69" rx="4" fill="#e9eef4"/><path d="M50 22H15.500a4 4 0 0 0-4 4v61a4 4 0 0 0 4 4H55c-1.500-9-2-18-2-28H43c0-14 2-28 7-41z" fill="url(#sky)"/><path d="M32 40v8M65 40v8" stroke="#1c2b3f" stroke-width="3.500" stroke-linecap="round"/><path d="M26 67c12 12 32 12 45 0" fill="none" stroke="#1c2b3f" stroke-width="2.600"/><path d="M50 22c-5 13-7 27-7 41h10c0 10 .5 19 2 28" fill="none" stroke="#33506f" stroke-width="1.200"/></svg>
  <svg viewBox="0 0 97 122"><circle cx="48.500" cy="57" r="38" fill="url(#orb)"/><circle cx="48.500" cy="57" r="38" fill="url(#rim)" stroke="#dfdfe6" stroke-width="3"/><path d="M48 53C34 56 26 64 18 75c12-8 22-15 31-17 9 5 17 9 25 10 2-6-10-14-23-14z" fill="#7fe3dc" opacity=".8"/><path d="M52 57c14 2 24 2 27-8 3 12-6 20-14 18-5-2-9-5-13-10z" fill="#2f9a78" opacity=".8"/><path d="M49 55c1-10-4-18-18-20 14-6 26-4 38 4-12 0-18 6-20 16z" fill="#e05aa8" opacity=".45"/><path d="M47 57c-2-12 0-22 4-30 0 10 3 18 4 24-2 2-4 4-4 8 4 8 8 22 8 30-7-8-10-20-12-32z" fill="#f08fdc" opacity=".75"/><circle cx="50" cy="55" r="6" fill="#fff" opacity=".95"/></svg>
  <svg viewBox="0 0 97 122"><circle cx="48.500" cy="57" r="38.500" fill="url(#steel)" stroke="#ccd0d2" stroke-width="2"/><path d="M71 34c-16 1-26 9-32 22l-17 4-1 5 9-3 10 13 6 2-3 9c6-3 12-8 13-17C66 58 71 46 71 34zM25 85c2-9 5-15 9-15l4 5c-1 5-6 9-13 10z" fill="#4a4c4f"/><circle cx="57" cy="49" r="5" fill="#a9b3b8"/></svg>
  <svg class="run" viewBox="0 0 97 122"><circle cx="48.500" cy="57" r="38" fill="url(#saf)" stroke="#ececec" stroke-width="3"/><circle cx="48.500" cy="57" r="32" fill="none" stroke="#dcefff" stroke-width="5" stroke-dasharray="1 2.350"/><path d="M75 32 54 61l-9-9z" fill="#e03c35"/><path d="M28 80 45 52l9 9z" fill="#e9ecee"/></svg>
  <svg viewBox="0 0 97 122"><g transform="rotate(-6 48 57)"><rect x="18" y="20" width="60" height="74" fill="#fafafa" stroke="#fafafa" stroke-width="4" stroke-dasharray="3.500 2.500"/><rect x="23" y="25" width="50" height="64" fill="#4c92e2"/></g><path d="M28 31c8 0 14 9 15 20l4 8-10 4c-5-9-11-20-9-32z" fill="#55504c"/><path d="M47 57c9 0 14 6 17 14l3 7c-8-1-14-5-19-12z" fill="#4c433c"/><path d="M36 62c2-5 8-8 13-7 4 3 5 8 3 12l-7 9-3-7-6 4 2-6z" fill="#b88d5b"/><circle cx="71" cy="80" r="17" fill="none" stroke="#3b4350" stroke-width="2.500" opacity=".7"/><circle cx="71" cy="80" r="11" fill="#3b4350" opacity=".35"/></svg>
  <svg viewBox="0 0 97 122"><path d="M66 22l9 2 6 60-8 6z" fill="#e9e9e9"/><path d="M74 38l5 1 2 14-5 1z" fill="#5bb9ea"/><path d="M76 54l5 1 1 13-5 1z" fill="#63c757"/><path d="M77 69h5l1 13-6 1z" fill="#ee9b2e"/><path d="M10 25c0-3 54-12 56-10l6 5 6 63c0 3-52 16-56 15-2-2-12-68-12-73z" fill="url(#tan)"/><circle cx="44" cy="51" r="19" fill="none" stroke="#8c6431" stroke-width="1.500"/><path d="M29 61c6-3 6-5 4-12 0-10 10-10 10-2 0-8 12-7 11 2-1 7 0 7 5 11-8 8-22 8-30 1z" fill="#9a6f3b"/></svg>
  <svg viewBox="0 0 97 122"><path d="M9 30l64-10 11 62-63 12z" fill="#55606b"/><path d="M11 31l59-11 9 60-56 12z" fill="#fafafa"/><path d="M11 31l58-12 2 21-57 13z" fill="#d9564e"/><text x="27" y="44" class="jun" transform="rotate(-8 40 40)">JUN</text><text x="33" y="76" class="nine">9</text></svg>
  <svg viewBox="0 0 97 122"><path d="M11 27l58-12 11 73-58 10z" fill="#fbfbf7"/><path d="M11 25l57-10 3 15-58 12z" fill="#f8ce46"/><path d="M14 47l58-10M15 53l58-10M16 59l58-10M17 65l58-10M18 71l58-10M19 77l58-10M20 83l58-10M21 89l58-10" stroke="#c9c9c9" stroke-width="1.500"/></svg>
  <svg viewBox="0 0 97 122"><path d="M16 24l50-8q5 0 6 5l8 62q0 5-5 6l-46 6q-6 0-7-5L11 30q0-5 5-6z" fill="#fafafa"/><path d="M31 28l32-6M33 47l34-6M36 65l34-6M39 84l34-6" stroke="#ccc" stroke-width="1.500"/><circle cx="22" cy="38" r="5.500" fill="#f0953a"/><circle cx="24" cy="51" r="5.500" fill="#4aa9f2"/><circle cx="26" cy="65" r="5.500" fill="#7cd653"/><circle cx="28" cy="79" r="5.500" fill="#c17ae2"/></svg>
  <svg viewBox="0 0 97 122"><path d="M10 31l64-11 12 63-66 11z" fill="#f4f0e8"/><path d="M13 34l13-3 10 58-14 3z" fill="#f3cfd5"/><path d="M15 52l40 26-4 10-33-22z" fill="#f3c84f"/><path d="M26 30l10-2 8 44-9 2z" fill="#4a93e3"/><path d="M46 27l27-5 7 33c-22 2-30-12-34-28z" fill="#a4d67f"/><circle cx="33" cy="64" r="11" fill="#2f78d8"/><path d="M33 55l6 15-6-4-6 4z" fill="#fff"/><circle cx="71" cy="73" r="19" fill="#f5f5f5"/><circle cx="71" cy="73" r="10" fill="none" stroke="#4a7da8" stroke-width="2"/><path d="M71 55l3 5h-6z" fill="#e23b30"/><text x="64" y="77" class="td">3D</text></svg>
  <svg viewBox="0 0 97 122"><circle cx="48.500" cy="57" r="39" fill="#f3f3f3"/><g transform="translate(48.500 57)" opacity=".88"><rect x="-10" y="-33" width="20" height="31" rx="10" fill="#f09a3a"/><rect x="-10" y="-33" width="20" height="31" rx="10" fill="#f0dd3f" transform="rotate(45)"/><rect x="-10" y="-33" width="20" height="31" rx="10" fill="#b2cf5f" transform="rotate(90)"/><rect x="-10" y="-33" width="20" height="31" rx="10" fill="#6dbb82" transform="rotate(135)"/><rect x="-10" y="-33" width="20" height="31" rx="10" fill="#73b0e0" transform="rotate(180)"/><rect x="-10" y="-33" width="20" height="31" rx="10" fill="#9285cd" transform="rotate(225)"/><rect x="-10" y="-33" width="20" height="31" rx="10" fill="#bd7fae" transform="rotate(270)"/><rect x="-10" y="-33" width="20" height="31" rx="10" fill="#e35343" transform="rotate(315)"/></g></svg>
  <svg viewBox="0 0 97 122"><rect x="9" y="20" width="79" height="73" rx="5" fill="url(#steel)"/><circle cx="48.500" cy="57" r="33" fill="#242527"/><circle cx="48.500" cy="57" r="27" fill="none" stroke="#a3a3a3" stroke-width="6" stroke-dasharray="3.500 2.160"/><circle cx="48.500" cy="57" r="22.500" fill="#3a3b3d" stroke="#a3a3a3" stroke-width="4"/><path d="M48.500 57 38 38M48.500 57h22M48.500 57 38 76" stroke="#a3a3a3" stroke-width="5"/><circle cx="48.500" cy="57" r="4.500" fill="#c6c6c6"/><circle cx="78" cy="29" r="17" fill="#d84a40"/><text x="72.500" y="36.500" class="badge">1</text></svg>
  <svg viewBox="0 0 97 122"><path d="M48 21c22 0 39 14 39 33S70 87 48 87c-5 0-9-.5-13-2-4 4-9 6-13 6 2-3 4-7 4-12C15 73 9 64 9 54c0-19 17-33 39-33z" fill="url(#msg)"/><path d="M62 53c13 0 23 9 23 19 0 6-3 11-8 15 0 3 1 5 3 7-4 0-7-2-9-4-19 4-32-5-32-18 0-10 10-19 23-19z" fill="#f2f7fc"/><path d="M49 72v.1M62 72v.1M74 72v.1" stroke="#2857a0" stroke-width="7.500" stroke-linecap="round"/></svg>
  <svg viewBox="0 0 97 122"><rect x="9" y="23" width="71" height="63" rx="9" fill="url(#grn)"/><rect x="20" y="39" width="33" height="31" rx="6" fill="#fff"/><path d="M56 50l13-10v30L56 60z" fill="#fff"/><circle cx="69" cy="71" r="19.500" fill="#f0f2f0"/><path d="M61 60l5-2 3 7-3 4c1 4 4 7 7 8l4-3 5 5-4 4c-11 2-22-12-17-23z" fill="#4ec53f"/></svg>
  <svg viewBox="0 0 97 122"><path d="M14 34l58-12 9 66-60 9z" fill="#f8f8f8"/><path d="M9 25l60-10 4 18-61 12z" fill="#f09b36"/><path d="M19 46l27-5 3 20-28 5z" fill="#3f8bdc"/><path d="M25 50c4 0 5 2 7 4 0-4 3-7 8-7 0 7-2 12-8 13-5 0-7-5-7-10z" fill="#f39a2c"/><path d="M50 40l14-3M51 46l14-3M52 52l14-3M22 71l44-8M23 77l44-8M24 83l32-6M25 89l30-6" stroke="#8b8b8b" stroke-width="1.800"/><text x="16" y="38" class="pg" transform="rotate(-9 16 38)">PAGES</text><path d="M73 16l7 2-16 60-6-2z" fill="#d88a33"/><path d="M59 71l7 2-8 23-3 1z" fill="#3d3d3f"/></svg>
  <svg viewBox="0 0 97 122"><path d="M13 62h70l4 31H8z" fill="#f6f6f6"/><rect x="20" y="57" width="14" height="29" rx="2" fill="#d44147"/><rect x="36" y="42" width="14" height="44" rx="2" fill="#e8993a"/><rect x="51" y="20" width="14" height="66" rx="2" fill="#56bd50"/><rect x="67" y="33" width="14" height="53" rx="2" fill="#3f8af0"/></svg>
  <svg viewBox="0 0 97 122"><ellipse cx="49" cy="92" rx="17" ry="6" fill="#cfdbe6"/><path d="M46 50h6v41h-6z" fill="#c2c6ca"/><path d="M20 18h58l6 32H13z" fill="#3f9cea"/><path d="M13 47h71v3H13z" fill="#1e5d94"/><path d="M29 22h41l3 21H26z" fill="#fff"/><circle cx="40" cy="35" r="7" fill="#55b6e8"/><path d="M40 35V28a7 7 0 0 1 7 7zM40 35h7a7 7 0 0 1-7 7z" fill="#8bd05b"/><path d="M53 31h14M53 35h14M53 39h14" stroke="#aaa" stroke-width="1.500"/><text x="32" y="27" class="kn">KEYNOTE</text></svg>
  <svg viewBox="0 0 97 122"><circle cx="48.500" cy="57" r="37.500" fill="#f5f5f5" stroke="#e2475c" stroke-width="4"/><path d="M28 36h15l27 42H56zM52 36h18v28zM28 50l18 28H28z" fill="#eb4d64"/></svg>
  <svg class="run" viewBox="0 0 97 122"><circle cx="48.500" cy="57" r="37.500" fill="#f5f5f8" stroke="url(#mus)" stroke-width="4"/><path d="M39 38l28-7v38c0 10-14 10-14 2 0-6 6-7 10-7V43l-20 5v28c0 10-14 10-14 2 0-6 6-7 10-7z" fill="url(#mus)"/></svg>
  <svg viewBox="0 0 97 122"><circle cx="48.500" cy="57" r="37.500" fill="url(#sky)" stroke="#e2e6ec" stroke-width="3.500"/><path d="M51 34 34 63M46 34l27 42M26 63h25M62 63h11M32 70l-4 5" stroke="#fff" stroke-width="6" stroke-linecap="round"/></svg>
  <i class="sep short"></i>
  <svg class="run" viewBox="0 0 97 122"><path d="M31 23h53q4 0 4 4v13H28V27q0-4 3-4z" fill="#56a3ea"/><path d="M28 40h60v17H28z" fill="#3c7ccf"/><path d="M28 57h60v17H28z" fill="#2655b4"/><path d="M28 74h60v13q0 4-4 4H32q-4 0-4-4z" fill="#1d3f8c"/><rect x="10" y="37" width="39" height="40" rx="4" fill="#2454b5"/><text x="15.500" y="67" class="wd">W</text></svg>
  <svg class="run" viewBox="0 0 97 122"><circle cx="48.500" cy="57" r="41" fill="#c94f43"/><path d="M13 36 32 66l16 31A41 41 0 0 1 13 36z" fill="#4a9b5e"/><path d="M84 38H48.500l17 29L48 98A41 41 0 0 0 84 38z" fill="#f2cc57"/><circle cx="48.500" cy="57" r="18.500" fill="#f3f3f3"/><circle cx="48.500" cy="57" r="15" fill="#4c86ec"/><circle cx="73.500" cy="82.500" r="17" fill="#f2f5fa" stroke="#5e9bf0" stroke-width="3.500"/><text x="68" y="90" class="one">1</text></svg>
  <svg class="run" viewBox="0 0 97 122"><rect x="9" y="17" width="79" height="80" rx="21" fill="url(#zm)"/><rect x="24" y="43" width="35" height="28" rx="6" fill="#fff"/><path d="M61 52l12-9v28l-12-9z" fill="#fff"/></svg>
  <svg class="run" viewBox="0 0 97 122"><circle cx="48.500" cy="57" r="40" fill="url(#gh)" stroke="#ececec" stroke-width="3.500"/><path d="M28 34c4 0 8 2 11 4 6-2 13-2 19 0 3-2 7-4 11-4 1 4 1 7 0 10 4 5 6 10 4 17-2 8-8 11-14 13v23a40 40 0 0 1-19 0V87c-8 2-13-3-14-10-1-3-3-4-5-6 5-1 8 3 9 7 2 4 6 5 10 3l1-7c-8-2-13-6-15-13-1-7 0-12 4-17-2-3-3-6-2-10z" fill="#f0f0f0"/></svg>
  <svg class="run" viewBox="0 0 97 122"><path d="M7 22l20-8 14 8 14-8h26l10 28-6 12 6 16-16 8-5 22-49-10z" fill="url(#wsg)"/><path d="M56 14h24l3 14-22 8H42z" fill="#f5ee60"/><path d="M83 28l8 14-8 12-4-26z" fill="#4b8be8"/><rect x="24" y="32" width="50" height="50" fill="#0c0c0c"/><text x="26" y="60" class="wst">WS</text><path d="M29 74h18" stroke="#fff" stroke-width="4"/></svg>
  <svg class="run" viewBox="0 0 97 122"><path d="M10 24l58-9 12 73-60 10z" fill="#fafafa"/><path d="M12 34l57-9M13 41l57-9M14 48l57-9M15 55l57-9M16 62l57-9M17 69l57-9M18 76l57-9M19 83l57-9M20 90l57-9" stroke="#b6bfc8" stroke-width="1.300"/><path d="M18 24l9 72" stroke="#ef9d9d"/><path d="M73 17l4 1-20 66-4 12 1-14z" fill="#6c8fae" stroke="#4d6476"/></svg>
  <i class="sep"></i>
  <svg viewBox="0 0 97 122"><path d="M18 27l5-8 12 2 6-6 10 6 9-6 9 5 11 6-1 10H20z" fill="#cfcfcf"/><path d="M28 24l9 8-6 2zM58 16l-8 16 8-4zM66 22l6 8-10 2z" fill="#4a4440"/><path d="M48 26l6-3 2 8-7 1z" fill="#d9663a"/><path d="M38 22l6 2-2 8-6-3z" fill="#4aa3b8"/><path d="M17 25c4 8 14 10 20 9 12 2 36 1 44-9l-7 64c-2 10-46 10-50 0z" fill="url(#can)" opacity=".93"/></svg>
</footer>
</body>
</html>
```
FILE: styles.css
```css
* { box-sizing: border-box; }
body {
  margin: 0; width: 2880px; height: 1800px; overflow: hidden;
  display: flex; flex-direction: column;
  background: linear-gradient(90deg, #000 10%, #020a18 50%, #000 85%);
  font: 28px/1 Inter, "Liberation Sans", sans-serif; letter-spacing: -.25px; color: #24292e;
}
.defs { position: absolute; width: 0; height: 0; }
p, h1, h3 { margin: 0; font-weight: 400; }
svg { flex: none; display: block; overflow: visible; }
span, b, a, em, code { white-space: nowrap; font-style: normal; }

/* macOS menu bar */
.menubar { height: 44px; flex: none; display: flex; align-items: center; background: #adadad; color: #000; padding-left: 41px; }
.apple { width: 27px; height: 33px; margin-right: 40px; position: relative; top: -2px; }
.menus { display: flex; gap: 35.7px; }
.menus b { letter-spacing: .2px; margin-right: 3px; }
.status { margin-left: auto; display: flex; align-items: center; padding-right: 46px; }
.st-zoom { width: 32px; height: 32px; margin-right: 24px; }
.st-box { width: 28px; height: 32px; margin-right: 29px; }
.st-docker { width: 36px; height: 30px; margin-right: 25px; }
.st-air { width: 36px; height: 28px; margin-right: 22px; }
.st-wifi { width: 42px; height: 29px; margin-right: 22px; }
.pct { font-size: 24px; letter-spacing: -.8px; width: 58px; }
.st-bat { width: 46px; height: 24px; margin-right: 41px; }
.clock { width: 209px; }
.st-find { width: 29px; height: 29px; margin-right: 34px; }
.st-siri { width: 32px; height: 32px; margin-right: 24px; }
.st-list { width: 37px; height: 20px; }

/* Browser window */
.window { height: 1606px; margin-top: 2px; flex: none; background: #fff; border-radius: 10px; overflow: hidden; display: flex; flex-direction: column; }
.tabstrip { height: 84px; flex: none; display: flex; align-items: flex-end; background: #dfe0e5; border-top: 2px solid #efeff2; font-size: 24px; letter-spacing: -.1px; color: #3c4043; }
.lights { width: 157px; height: 68px; padding: 15px 0 0 26px; display: flex; gap: 16px; }
.lights i { width: 24px; height: 24px; border-radius: 50%; }
.red { background: #ed6a5e; } .yellow { background: #f5bf4f; } .green { background: #61c554; }
.tab { width: 478px; height: 68px; display: flex; align-items: center; padding-left: 23px; position: relative; }
.fav { width: 32px; height: 32px; margin-right: 16px; }
.box { background: #2562cf; border-radius: 6px; color: #fff; font-size: 16px; font-weight: 500; line-height: 30px; text-align: center; letter-spacing: -.8px; }
.ttl { width: 350px; height: 40px; line-height: 40px; overflow: hidden; -webkit-mask-image: linear-gradient(90deg, #000 308px, transparent 350px); }
.t1 { letter-spacing: -.3px; }
.nofade { -webkit-mask-image: none; }
.x { width: 17px; height: 17px; margin-left: 17px; }
.tab.div::before { content: ""; position: absolute; left: 0; top: 15px; width: 2px; height: 39px; background: #8b8e94; }
.active { background: #fff; border-radius: 16px 16px 0 0; }
.active::before, .active::after { content: ""; position: absolute; bottom: 0; width: 16px; height: 16px; }
.active::before { left: -16px; background: radial-gradient(circle at 0 0, transparent 15.500px, #fff 16px); }
.active::after { right: -16px; background: radial-gradient(circle at 100% 0, transparent 15.500px, #fff 16px); }
.plus { width: 24px; height: 24px; margin: 0 0 22px 33px; }

.toolbar { height: 72px; flex: none; display: flex; align-items: center; padding-left: 30px; }
.nav-i { width: 28px; height: 27px; margin-right: 36px; }
.nav-i:nth-child(3) { margin-right: 30px; }
.omni { width: 2358px; height: 56px; border-radius: 28px; background: #f1f3f4; display: flex; align-items: center; padding: 0 21px 0 28px; }
.lock { width: 17px; height: 24px; margin-right: 23px; }
.url { font-size: 28px; letter-spacing: -.08px; color: #202124; }
.url em { color: #5f6368; }
.star { width: 30px; height: 28px; margin-left: auto; }
.ext { width: 32px; height: 32px; margin-left: 28px; }
.ext + .ext { margin-left: 32px; }
.pro { font: italic 600 9.500px Inter, sans-serif; fill: #fff; letter-spacing: 0; }
.vline { width: 2px; height: 32px; background: #c9cbce; margin: 0 22px 0 28px; }
.avatar-v { width: 44px; height: 44px; border-radius: 50%; background: #e25d32; color: #fff; font-size: 23px; line-height: 45px; text-align: center; }
.upd { width: 32px; height: 32px; margin-left: 26px; }

.bookmarks { height: 66px; flex: none; display: flex; align-items: center; padding: 0 0 7px 31px; border-bottom: 2px solid #d9dbdf; font-size: 24px; letter-spacing: -.1px; color: #3c4043; }
.bm { line-height: 30px; }
.b-apps { width: 26px; height: 26px; margin-right: 19px; } .w1 { width: 91px; }
.b-gmail { width: 31px; height: 23px; margin-right: 15px; } .w2 { width: 99px; }
.b-yt { width: 29px; height: 22px; margin-right: 17px; } .w3 { width: 134px; }
.b-map { width: 22px; height: 32px; margin-right: 20px; } .w4 { width: 94px; }
.b-gh { width: 32px; height: 32px; margin-right: 16px; } .w5 { width: 262px; letter-spacing: -.08px; }
.b-globe { width: 28px; height: 28px; margin-right: 18px; }

/* GitHub page */
.page { flex: 1; position: relative; overflow: hidden; }
.hero { height: 334px; border-bottom: 2px solid #e1e4e8; display: flex; flex-direction: column; align-items: center; overflow: hidden;
  background: linear-gradient(180deg, rgba(255,255,255,0) 24%, #fff 98%), linear-gradient(80deg, #dcecfd 33%, #e3f3fa 62%, #ecfef1 100%); }
.hero p { font-size: 36px; line-height: 54px; margin-top: -14px; letter-spacing: -.910px; color: #586069; }
.guide { width: 432px; height: 84px; margin-top: 60px; border: 2px solid; border-color: #58a858 #4f9f4f #468c46; border-radius: 8px; background: linear-gradient(#6acb68, #52a351); color: #fff; font-weight: 600; font-size: 32px; line-height: 81px; text-align: center; letter-spacing: -.35px; }
.repohead { height: 216px; background: #fafbfc; border-bottom: 2px solid #e1e4e8; }
.col { width: 1960px; margin: 0 auto; }
.titlebar { height: 136px; padding-top: 32px; display: flex; align-items: flex-start; line-height: 55px; }
.titlebar > .oct { margin: 12px 15px 0 0; }
.oct { width: 32px; height: 32px; fill: currentColor; }
.muted { color: #959da5; }
.owner, .repo { color: #2a66d1; font-size: 36px; letter-spacing: -1.050px; }
.repo { font-weight: 600; letter-spacing: -1.150px; }
.slash { font-size: 36px; color: #586069; width: 31px; text-align: center; }
.socials { margin-left: auto; display: flex; gap: 20px; }
.grp { display: flex; height: 56px; }
.btn { height: 56px; border: 2px solid #c9cccf; border-radius: 6px; background: linear-gradient(#fafbfc, #eff3f6 90%); font-size: 24px; font-weight: 600; line-height: 52px; letter-spacing: .05px; display: flex; align-items: center; padding-left: 20px; }
.btn.l { border-radius: 6px 0 0 6px; }
.btn .oct { margin-right: 6px; }
.off { color: #9b9fa4; background: #eff3f6; }
.cnt { border: 2px solid #d0d2d5; border-left: 0; border-radius: 0 6px 6px 0; background: #fff; font-size: 24px; font-weight: 600; line-height: 52px; text-align: center; }
.g1 { width: 208px; } .c1 { width: 54px; }
.g2 { width: 132px; } .c2 { width: 56px; }
.g3 { width: 136px; } .c3 { width: 58px; }
.g3 .oct { margin-right: 8px; }
.caret { border: 8px solid transparent; border-top-color: currentColor; border-bottom: 0; margin-left: 7px; }
.rtabs { display: flex; height: 80px; }
.rtabs a { display: flex; align-items: center; padding: 5px 0 0 26px; height: 80px; color: #586069; }
.rtabs .oct { margin-right: 7px; color: #b2b5b8; }
.rtabs b, .ptabs b { height: 32px; border-radius: 16px; background: #e8eaec; font-size: 24px; line-height: 31px; font-weight: 600; text-align: center; color: #444d56; letter-spacing: 0; }
.rtabs b { width: 32px; margin: 4px 0 0 8px; }
.n-code { width: 160px; } .n-iss { width: 215px; } .n-pr { width: 293px; } .n-act { width: 189px; } .n-proj { width: 236px; } .n-wiki { width: 147px; } .n-sec { width: 236px; } .n-ins { width: 195px; }
.n-ins .oct { margin-right: 8px; }
.rtabs .on { background: #fff; color: #24292e; border: 2px solid #e1e4e8; border-top: 6px solid #d8672a; border-bottom: 0; border-radius: 6px 6px 0 0; height: 80px; padding: 0 0 0 23px; }
.rtabs .on .oct { color: #24292e; margin-right: 6px; }
.on b { width: 28px; }

.headline { display: flex; align-items: flex-start; padding-top: 56px; height: 136px; }
h1 { flex: 1; font-size: 64px; letter-spacing: -2.950px; line-height: 60px; white-space: nowrap; }
h1 span { font-weight: 300; color: #6a737d; letter-spacing: -2px; margin-left: -1px; }
.edit { width: 90px; margin-right: 8px; } .openw { width: 186px; }
.edit, .openw { letter-spacing: -.1px; }
.meta { display: flex; align-items: center; height: 56px; color: #586069; line-height: 52px; }
.meta b, .chead b { font-weight: 600; letter-spacing: -.1px; }
.meta > b, .meta > .wants, .meta > .from { padding-bottom: 2px; }
.state { width: 144px; height: 56px; background: #5cb85c; border-radius: 6px; color: #fff; font-weight: 600; display: flex; align-items: center; padding-left: 16px; line-height: 56px; margin-right: 16px; letter-spacing: 0; }
.state .oct { margin-right: 6px; }
.wants { margin: 0 8px 0 7px; }
.meta code { height: 42px; padding: 0 10px; border-radius: 6px; background: #f0f6fe; color: #2a66d1; font: 21px/43px "DejaVu Sans Mono", "Liberation Mono", monospace; letter-spacing: 0; margin-right: 7px; }
.from { margin-right: 8px; }
.clip { margin: -2px 0 0 1px; }
.ptabs { display: flex; height: 74px; margin-top: 34px; border-bottom: 2px solid #e1e4e8; }
.ptabs a { display: flex; align-items: center; padding: 2px 0 0 32px; height: 74px; color: #586069; }
.ptabs .oct { margin-right: 7px; }
.ptabs b { margin-left: 17px; width: 35px; margin-top: 4px; color: #586069; background: #ececee; }
.ptabs .on { border: 2px solid #e1e4e8; border-bottom: 0; border-radius: 6px 6px 0 0; background: #fff; color: #24292e; letter-spacing: -.3px; }
.p1 { width: 332px; margin-right: 8px; } .p2 { width: 280px; } .p3 { width: 263px; }
.p4 .oct, .p3 .oct, .p2 .oct { margin-right: 8px; }
.diffstat { margin-left: auto; display: flex; align-items: center; gap: 2px; padding-top: 2px; font-size: 24px; font-weight: 600; letter-spacing: -.4px; }
.diffstat i { width: 16px; height: 16px; background: #5cb85c; }
.add { color: #4fa34f; margin-right: 5px; } .del { color: #c5373d; margin-right: 8px; }

.cols { display: flex; padding-top: 32px; }
.discussion { width: 1454px; margin-right: 64px; }
.comment-row, .merge-row { display: flex; }
.avatar { width: 80px; height: 80px; margin-right: 32px; }
.comment { width: 1342px; height: 184px; border: 2px solid #c0d3eb; border-radius: 6px; position: relative; }
.arrow { position: absolute; width: 16px; height: 32px; left: -16px; top: 22px; }
.chead { height: 78px; background: #f1f8ff; border-bottom: 2px solid #c0d3eb; border-radius: 4px 4px 0 0; display: flex; align-items: center; padding: 0 39px 0 31px; color: #586069; }
.chead b { color: #24292e; margin-right: 7px; }
.chead span { letter-spacing: -.5px; }
.chead em { margin-left: auto; width: 96px; height: 48px; border: 2px solid #c0d3eb; border-radius: 6px; font-size: 24px; font-weight: 600; line-height: 43px; text-align: center; letter-spacing: -.1px; }
.chead .oct { margin: 2px 23px 0 24px; }
.kebab { width: 34px; height: 8px; fill: #586069; }
.comment p { padding-left: 30px; line-height: 104px; letter-spacing: -.28px; }
.timeline { height: 164px; border-bottom: 4px solid #e1e4e8; position: relative; display: flex; align-items: center; padding: 30px 0 0 130px; color: #586069; font: 24px/1 "DejaVu Sans Mono", "Liberation Mono", monospace; letter-spacing: 0; }
.rail { position: absolute; left: 144px; width: 4px; background: #e1e4e8; }
.rail.top { top: 0; height: 80px; } .rail.bot { bottom: 0; height: 48px; }
.node { color: #959da5; margin-right: 32px; }
.mini { width: 40px; height: 40px; margin: -8px 12px 0 0; }
.hash { margin-left: auto; }
.push { padding-left: 110px; margin-top: 41px; font-size: 24px; line-height: 34px; color: #586069; white-space: nowrap; letter-spacing: 0; }
.push b { font-weight: 600; color: #24292e; }
.push code { font: bold 24px/34px "DejaVu Sans Mono", "Liberation Mono", monospace; color: #24292e; letter-spacing: 0; }
.merge-row { margin-top: 33px; }
.merge-i { width: 78px; height: 56px; margin-right: 32px; }
.mergebox { width: 1344px; height: 120px; border: 2px solid #66cb6b; border-radius: 6px; position: relative; display: flex; padding: 30px 0 0 34px; }
.mergebox > i { width: 52px; height: 52px; border-radius: 50%; background: #dfe0e5; margin-right: 25px; }
.mergebox b { font-weight: 600; line-height: 40px; color: #444d56; letter-spacing: -.05px; }
aside { width: 442px; color: #586069; font-size: 24px; letter-spacing: .05px; }
.side h3 { font-size: 24px; font-weight: 600; display: flex; justify-content: space-between; align-items: flex-start; height: 36px; line-height: 30px; letter-spacing: 0; }
.side h3 .oct { color: #959da5; margin-top: 3px; }
.side p { line-height: 34px; margin: 16px 0 18px; }
.side p + p { margin-top: 0; }
.side .none { letter-spacing: -.2px; }
.s1, .s2 { border-bottom: 2px solid #e1e4e8; }
.s1 { height: 222px; padding-top: 33px; } .s2 { height: 154px; padding-top: 34px; } .s3 { padding-top: 31px; }
.s3 h3 { line-height: 38px; }
.s3 h3 .oct { margin-top: 1px; }
.s3 p { margin-top: 18px; }
.fade { position: absolute; left: 0; right: 0; bottom: 0; height: 60px; background: linear-gradient(rgba(0,0,0,0), rgba(0,0,0,.05)); }

/* Dock */
.dock { width: 2724px; height: 122px; margin: 26px auto 0; flex: none; display: flex; padding-left: 8px; border-radius: 10px 10px 0 0; background: linear-gradient(90deg, #4a4a4a, #4b4e58 45%, #4a4a4a 75%); }
.dock > svg { width: 97.050px; height: 122px; }
.dock > .run { background: radial-gradient(circle at 50% 114px, #000 3.700px, transparent 4.500px); }
.sep { width: 2px; height: 90px; margin: 16px 21px 0 22px; background: #151515; }
.sep.short { height: 58px; margin-top: 32px; }
.dock text { font-family: Inter, sans-serif; letter-spacing: 0; }
.jun { font-size: 14px; fill: #fff; } .nine { font-size: 40px; fill: #222; font-weight: 300; }
.td { font-size: 10.500px; fill: #333; } .badge { font-size: 20px; fill: #fff; }
.pg { font-size: 11px; fill: #fff; font-weight: 600; } .kn { font-size: 5px; font-weight: 800; fill: #222; }
.wd { font-size: 27px; font-weight: 700; fill: #fff; } .one { font-size: 20px; fill: #333; }
.wst { font-size: 28px; font-weight: 800; fill: #fff; }
```
